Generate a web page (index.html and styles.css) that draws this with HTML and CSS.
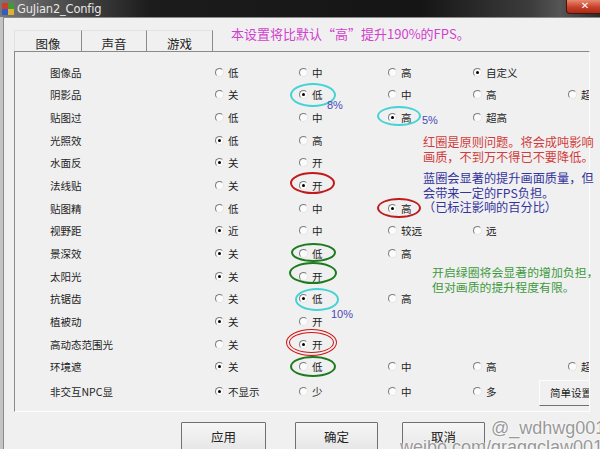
FILE: index.html
```html
<!DOCTYPE html>
<html>
<head>
<meta charset="utf-8">
<link rel="stylesheet" href="styles.css">
</head>
<body>
<div class="win">
  <div class="titlebar">
    <svg class="appicon" width="14" height="14" viewBox="0 0 14 14">
      <rect x="1" y="1" width="6" height="6" fill="#d23b2a"/>
      <rect x="7" y="1" width="6" height="6" fill="#3f9a3a"/>
      <rect x="1" y="7" width="6" height="6" fill="#2f5fc0"/>
      <rect x="7" y="7" width="6" height="6" fill="#e0b030"/>
    </svg>
    <span class="title">GuJian2_Config</span>
    <div class="close">✕</div>
  </div>
  <div class="client">
    <div class="top">
      <div class="tabs">
        <div class="tab tab-first">图像</div>
        <div class="tab tab-2">声音</div>
        <div class="tab tab-3">游戏</div>
      </div>
      <div class="notice">本设置将比默认“高”提升190%的FPS。</div>
    </div>
    <div class="panel">
      <div class="row"><span class="lbl">图像品</span><span class="opt"><i class="dot"></i>低</span><span class="opt"><i class="dot"></i>中</span><span class="opt"><i class="dot"></i>高</span><span class="opt on"><i class="dot"></i>自定义</span></div>
      <div class="row"><span class="lbl">阴影品</span><span class="opt"><i class="dot"></i>关</span><span class="opt on"><i class="dot"></i>低</span><span class="opt"><i class="dot"></i>中</span><span class="opt"><i class="dot"></i>高</span><span class="opt"><i class="dot"></i>超</span></div>
      <div class="row"><span class="lbl">贴图过</span><span class="opt"><i class="dot"></i>低</span><span class="opt"><i class="dot"></i>中</span><span class="opt on"><i class="dot"></i>高</span><span class="opt"><i class="dot"></i>超高</span></div>
      <div class="row"><span class="lbl">光照效</span><span class="opt on"><i class="dot"></i>低</span><span class="opt"><i class="dot"></i>高</span></div>
      <div class="row"><span class="lbl">水面反</span><span class="opt on"><i class="dot"></i>关</span><span class="opt"><i class="dot"></i>开</span></div>
      <div class="row"><span class="lbl">法线贴</span><span class="opt"><i class="dot"></i>关</span><span class="opt on"><i class="dot"></i>开</span></div>
      <div class="row"><span class="lbl">贴图精</span><span class="opt"><i class="dot"></i>低</span><span class="opt"><i class="dot"></i>中</span><span class="opt on"><i class="dot"></i>高</span></div>
      <div class="row"><span class="lbl">视野距</span><span class="opt on"><i class="dot"></i>近</span><span class="opt"><i class="dot"></i>中</span><span class="opt"><i class="dot"></i>较远</span><span class="opt"><i class="dot"></i>远</span></div>
      <div class="row"><span class="lbl">景深效</span><span class="opt on"><i class="dot"></i>关</span><span class="opt"><i class="dot"></i>低</span><span class="opt"><i class="dot"></i>高</span></div>
      <div class="row"><span class="lbl">太阳光</span><span class="opt on"><i class="dot"></i>关</span><span class="opt"><i class="dot"></i>开</span></div>
      <div class="row"><span class="lbl">抗锯齿</span><span class="opt"><i class="dot"></i>关</span><span class="opt on"><i class="dot"></i>低</span><span class="opt"><i class="dot"></i>高</span></div>
      <div class="row"><span class="lbl">植被动</span><span class="opt on"><i class="dot"></i>关</span><span class="opt"><i class="dot"></i>开</span></div>
      <div class="row"><span class="lbl">高动态范围光</span><span class="opt"><i class="dot"></i>关</span><span class="opt on"><i class="dot"></i>开</span></div>
      <div class="row"><span class="lbl">环境遮</span><span class="opt on"><i class="dot"></i>关</span><span class="opt"><i class="dot"></i>低</span><span class="opt"><i class="dot"></i>中</span><span class="opt"><i class="dot"></i>高</span><span class="opt"><i class="dot"></i>超</span></div>
      <div class="row"><span class="lbl">非交互NPC显</span><span class="opt on"><i class="dot"></i>不显示</span><span class="opt"><i class="dot"></i>少</span><span class="opt"><i class="dot"></i>中</span><span class="opt"><i class="dot"></i>多</span><span class="simple">简单设置</span></div>
    </div>
    <div class="btns">
      <div class="btn btn-apply">应用</div>
      <div class="btn btn-ok">确定</div>
      <div class="btn btn-cancel">取消</div>
    </div>
  </div>

  <div class="ring cyan r1"></div>
  <div class="ring cyan r2"></div>
  <div class="ring red r3"></div>
  <div class="ring red r4"></div>
  <div class="ring green r5"></div>
  <div class="ring green r6"></div>
  <div class="ring cyan r7"></div>
  <div class="ring reddbl r8"></div>
  <div class="ring green r9"></div>

  <span class="pct p1">8%</span>
  <span class="pct p2">5%</span>
  <span class="pct p3">10%</span>

  <div class="note note-red">红圈是原则问题。将会成吨影响<br>画质，不到万不得已不要降低。</div>
  <div class="note note-blue">蓝圈会显著的提升画面质量，但<br>会带来一定的FPS负担。<br>（已标注影响的百分比）</div>
  <div class="note note-green">开启绿圈将会显著的增加负担，<br>但对画质的提升程度有限。</div>

  <div class="wm wm1">@_wdhwg001</div>
  <div class="wm wm2">weibo.com/graggclaw001</div>
</div>
</body>
</html>
```
FILE: styles.css
```css
html, body {
  margin: 0;
  padding: 0;
}
body {
  width: 600px;
  height: 449px;
  overflow: hidden;
  font-family: "Noto Sans CJK SC", sans-serif;
  color: #1c1c1c;
}
.win {
  position: relative;
  width: 600px;
  height: 449px;
  overflow: hidden;
  background: #c4c4c4;
}
.titlebar {
  position: relative;
  height: 17px;
  display: flex;
  align-items: center;
  background: linear-gradient(90deg, #787878 0, #4a4a4a 70px, #1c1c1c 150px, #151515 420px, #3c3c3c 530px, #555 560px, #2a2a2a 600px);
}
.appicon {
  margin-left: 1px;
}
.title {
  margin-left: 2px;
  font-family: "DejaVu Sans", sans-serif;
  font-size: 11.5px;
  color: #e6e6e6;
  letter-spacing: -0.2px;
}
.close {
  position: absolute;
  right: -4px;
  top: 0;
  width: 38px;
  height: 14px;
  box-sizing: border-box;
  border: 1px solid #4a1208;
  border-top: none;
  border-radius: 0 0 4px 4px;
  background: linear-gradient(#e88a70, #c8402a 55%, #a82a18);
  color: #fff;
  font-size: 10px;
  font-family: "DejaVu Sans", sans-serif;
  font-weight: bold;
  line-height: 12px;
  text-align: center;
}
.client {
  margin-left: 3px;
  height: 432px;
  box-sizing: border-box;
  border-left: 1px solid #8a8a8a;
  border-top: 1px solid #8a8a8a;
  background: #f0f0f0;
  padding-top: 12px;
}
.top {
  display: flex;
  align-items: flex-start;
  padding-left: 10px;
}
.tabs {
  display: flex;
  height: 21px;
}
.tab {
  box-sizing: border-box;
  height: 21px;
  padding-top: 5px;
  text-align: center;
  font-size: 12.5px;
  line-height: 15px;
  color: #222;
  border-top: 1px solid #e2e2e2;
  border-right: 1px solid #8a8a8a;
}
.tab-first {
  width: 68px;
  border-left: 1px solid #e2e2e2;
}
.tab-2 {
  width: 65px;
}
.tab-3 {
  width: 66px;
}
.notice {
  margin-left: 18px;
  margin-top: -4px;
  font-size: 13px;
  line-height: 16px;
  color: #d040cf;
}
.panel {
  margin-left: 10px;
  width: 576px;
  height: 361px;
  box-sizing: border-box;
  border: 1px solid;
  border-color: #8a8a8a #fdfdfd #fdfdfd #8a8a8a;
  padding: 9px 0 0 35px;
  overflow: hidden;
}
.row {
  display: grid;
  grid-template-columns: 165px 84px 89px 85px 95px 1fr;
  height: 22.65px;
  align-items: center;
  font-size: 10.5px;
  line-height: 13px;
}
.lbl {
  color: #1e1e1e;
}
.opt {
  display: flex;
  align-items: center;
  gap: 4px;
  white-space: nowrap;
}
.dot {
  position: relative;
  flex: none;
  width: 9px;
  height: 9px;
  box-sizing: border-box;
  border-radius: 50%;
  border: 1px solid;
  border-color: #7c7c7c #e6e6e6 #e6e6e6 #7c7c7c;
  background: #fbfbfb;
}
.on .dot::after {
  content: "";
  position: absolute;
  left: 2px;
  top: 2px;
  width: 3px;
  height: 3px;
  border-radius: 50%;
  background: #000;
}
.simple {
  align-self: start;
  margin-top: 2px;
  margin-left: -29px;
  width: 60px;
  height: 26px;
  box-sizing: border-box;
  border: 1px solid;
  border-color: #fcfcfc #707070 #707070 #fcfcfc;
  padding: 5px 0 0 10px;
  white-space: nowrap;
}
.btns {
  display: flex;
  margin-top: 10px;
}
.btn {
  height: 30px;
  box-sizing: border-box;
  border: 1px solid #707070;
  border-radius: 1px;
  background: linear-gradient(#f6f6f6, #e6e6e6);
  text-align: center;
  padding-top: 6px;
  font-size: 12.5px;
  line-height: 16px;
  color: #222;
}
.btn-apply {
  margin-left: 177px;
  width: 85px;
}
.btn-ok {
  margin-left: 29px;
  width: 83px;
}
.btn-cancel {
  margin-left: 24px;
  width: 83px;
}
.ring {
  position: absolute;
  box-sizing: border-box;
  border-radius: 50%;
}
.cyan {
  border: 2.5px solid #44d2d4;
}
.red {
  border: 2px solid #c01a1a;
}
.green {
  border: 2px solid #1e7a1e;
}
.reddbl {
  border: 4px double #d01414;
}
.r1 { left: 290px; top: 83px; width: 46px; height: 24px; }
.r2 { left: 377px; top: 106px; width: 44px; height: 20px; }
.r3 { left: 290px; top: 172px; width: 45px; height: 22px; }
.r4 { left: 377px; top: 198px; width: 44px; height: 20px; }
.r5 { left: 291px; top: 243px; width: 45px; height: 19px; }
.r6 { left: 289px; top: 262px; width: 48px; height: 22px; }
.r7 { left: 295px; top: 288px; width: 44px; height: 23px; }
.r8 { left: 286px; top: 329px; width: 51px; height: 27px; }
.r9 { left: 290px; top: 356px; width: 46px; height: 21px; }
.pct {
  position: absolute;
  font-family: "Liberation Sans", sans-serif;
  font-size: 11px;
  line-height: 12px;
  color: #4a4ab8;
}
.p1 { left: 327px; top: 99px; }
.p2 { left: 422px; top: 114px; }
.p3 { left: 331px; top: 308px; }
.note {
  position: absolute;
  font-size: 12.2px;
  line-height: 14.5px;
  white-space: nowrap;
}
.note-red {
  left: 423px;
  top: 135px;
  color: #d03c3c;
}
.note-blue {
  left: 423px;
  top: 171px;
  color: #34349e;
}
.note-green {
  left: 432px;
  top: 265px;
  font-size: 11.9px;
  color: #3e9a3e;
}
.wm {
  position: absolute;
  font-family: "Liberation Sans", sans-serif;
  font-size: 18px;
  line-height: 21px;
  color: #999;
  text-shadow: 0 0 2px #fff, 0 0 2px #fff;
  white-space: nowrap;
}
.wm1 { left: 491px; top: 418px; }
.wm2 { left: 400px; top: 437px; }
```
